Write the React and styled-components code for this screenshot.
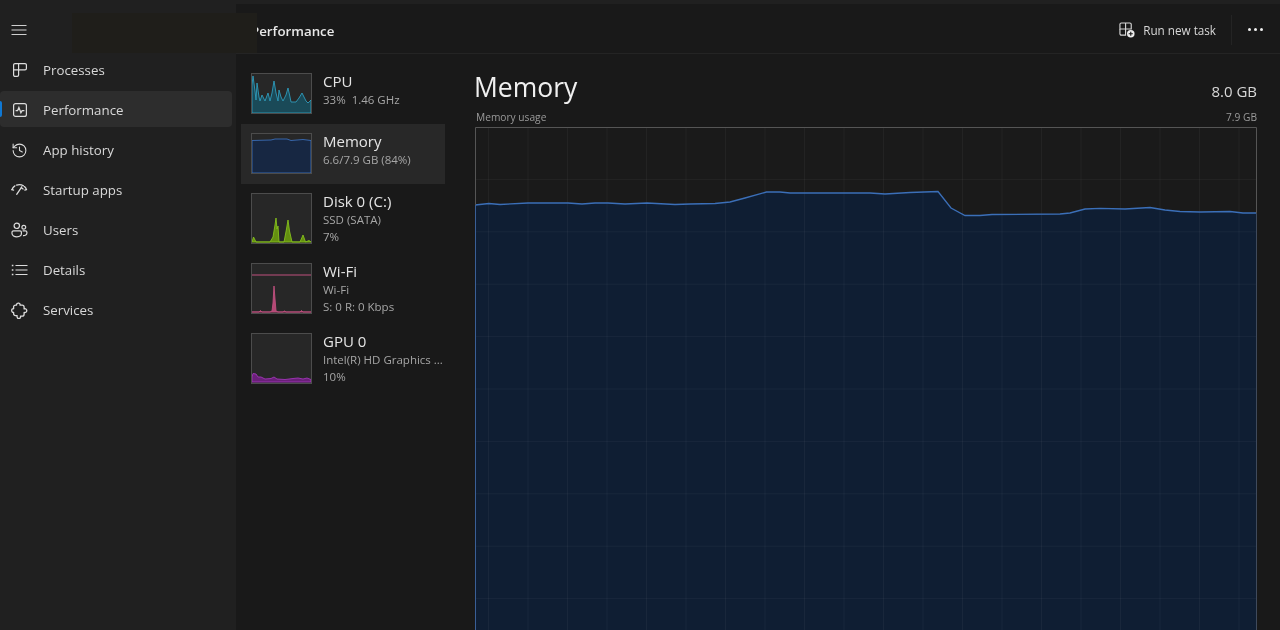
import React from "react";
import styled, { createGlobalStyle } from "styled-components";
import { History } from "lucide-react";

const GlobalStyle = createGlobalStyle`
  html, body {
    margin: 0;
    height: 100%;
    overflow: hidden;
    background: #191919;
  }
  body {
    font-family: "Open Sans", "Noto Sans", sans-serif;
  }
`;

const Window = styled.div`
  position: relative;
  display: grid;
  grid-template-columns: 236px 1fr;
  width: 1280px;
  height: 630px;
  overflow: hidden;
  background: #191919;
  color: #e0e0e0;
  filter: blur(0.35px);
`;

const Sidebar = styled.nav`
  background: #202020;
  display: flex;
  flex-direction: column;
  padding-top: 10px;
`;

const MenuButton = styled.div`
  height: 39px;
  padding-left: 11px;
  display: flex;
  align-items: center;
  margin-bottom: 2px;
  color: #cfcfcf;
`;

const NavList = styled.div`
  display: flex;
  flex-direction: column;
  gap: 4px;
  padding-right: 4px;
`;

const NavItem = styled.div`
  position: relative;
  height: 36px;
  box-sizing: border-box;
  padding: 2px 0 0 11px;
  display: flex;
  align-items: center;
  gap: 15px;
  border-radius: 4px;
  font-size: 13.3px;
  color: #d8d8d8;
  background: ${({ $active }) => ($active ? "#2d2d2d" : "transparent")};

  &::before {
    content: "";
    display: ${({ $active }) => ($active ? "block" : "none")};
    position: absolute;
    left: 0;
    top: 10px;
    width: 2px;
    height: 16px;
    border-radius: 0 2px 2px 0;
    background: #0f78d4;
  }
`;

const IconSlot = styled.span`
  width: 17px;
  height: 17px;
  display: flex;
  align-items: center;
  justify-content: center;
  color: #dcdcdc;
`;

const Main = styled.main`
  display: flex;
  flex-direction: column;
  min-width: 0;
`;

const TopStrip = styled.div`
  height: 4px;
  background: #202020;
`;

const Header = styled.header`
  height: 50px;
  box-sizing: border-box;
  border-bottom: 1px solid #242424;
  display: flex;
  align-items: center;
  justify-content: space-between;
  padding: 2px 17px 0 15px;
`;

const PageTitle = styled.h1`
  margin: 2px 0 0;
  font-size: 13.3px;
  font-weight: 600;
  color: #e8e8e8;
`;

const Actions = styled.div`
  display: flex;
  align-items: center;
`;

const RunTask = styled.div`
  display: flex;
  align-items: center;
  gap: 8px;
  font-size: 11.7px;
  color: #d8d8d8;
  padding-right: 15px;
`;

const Divider = styled.span`
  width: 1px;
  height: 30px;
  background: #242424;
`;

const MoreDots = styled.div`
  display: flex;
  gap: 3px;
  padding-left: 16px;

  span {
    width: 3px;
    height: 3px;
    border-radius: 50%;
    background: #f0f0f0;
  }
`;

const Body = styled.div`
  flex: 1;
  display: flex;
  min-height: 0;
`;

const DeviceList = styled.div`
  width: 204px;
  margin: 0 5px;
  padding-top: 10px;
  display: flex;
  flex-direction: column;
`;

const DeviceRow = styled.div`
  display: flex;
  gap: 11px;
  padding: 9px 0 0 10px;
  height: ${({ $tall }) => ($tall ? "70px" : "60px")};
  box-sizing: border-box;
  background: ${({ $active }) => ($active ? "#282828" : "transparent")};
`;

const Thumb = styled.svg`
  flex: none;
  display: block;
  width: 61px;
  height: ${({ $tall }) => ($tall ? "51px" : "41px")};
`;

const DeviceText = styled.div`
  min-width: 0;
  display: flex;
  flex-direction: column;
  white-space: pre;
`;

const DeviceName = styled.div`
  font-size: 15px;
  line-height: 17.5px;
  color: #e4e4e4;
`;

const DeviceLine = styled.div`
  font-size: 11.5px;
  line-height: 17px;
  color: #a6a6a6;
`;

const Detail = styled.section`
  flex: 1;
  min-width: 0;
  padding: 0 23px 0 25px;
  display: flex;
  flex-direction: column;
`;

const TitleRow = styled.div`
  display: flex;
  justify-content: space-between;
  align-items: flex-end;
  height: 51px;
`;

const Heading = styled.h2`
  margin: 0 0 0 -1px;
  font-size: 26.5px;
  line-height: 36px;
  font-weight: 400;
  color: #f0f0f0;
`;

const Capacity = styled.div`
  font-size: 15px;
  line-height: 20px;
  color: #d8d8d8;
  padding-bottom: 4px;
`;

const ChartLabels = styled.div`
  display: flex;
  justify-content: space-between;
  height: 20px;
  align-items: center;
  padding-left: 1px;
  margin-top: 2px;
  font-size: 10.2px;
  color: #9a9a9a;
`;

const ChartFrame = styled.svg`
  display: block;
  width: 782px;
  height: 524px;
  flex: none;
  overflow: hidden;
`;

// flat dark patch that lies over the title bar in the reference
const CoverPatch = styled.div`
  position: absolute;
  left: 72px;
  top: 13px;
  width: 185px;
  height: 40px;
  background: #1f1e1a;
`;

const navItems = [
  {
    label: "Processes",
    icon: (
      <svg width="16" height="16" viewBox="0 0 16 16" fill="none" stroke="currentColor" strokeWidth="1.2">
        <path d="M3 1.600h3.600v6.200H1.600V3A1.400 1.400 0 0 1 3 1.600Z" />
        <path d="M6.600 1.600H13A1.400 1.400 0 0 1 14.400 3v3.400a1.400 1.400 0 0 1-1.400 1.400H6.600" />
        <path d="M1.600 7.800V13A1.400 1.400 0 0 0 3 14.400h2.200a1.400 1.400 0 0 0 1.400-1.400V7.800" />
      </svg>
    ),
  },
  {
    label: "Performance",
    active: true,
    icon: (
      <svg width="16" height="16" viewBox="0 0 16 16" fill="none" stroke="currentColor" strokeWidth="1.2">
        <rect x="1.600" y="1.600" width="12.800" height="12.800" rx="2" />
        <path d="M3.600 8.600h2l1.300-3.200 2 5.400 1.200-2.200h2.300" />
      </svg>
    ),
  },
  { label: "App history", icon: <History size={17} strokeWidth={1.5} /> },
  {
    label: "Startup apps",
    icon: (
      <svg width="17" height="17" viewBox="0 0 17 17" fill="none" stroke="currentColor" strokeWidth="1.3" strokeLinecap="round">
        <path d="M.9 7.600c.7-1.900 1.800-3 3-3.700" />
        <path d="M.9 7.600l1.700.5" />
        <path d="M5.600 3.100c2.200-.8 4.800-.6 6.800.7" />
        <path d="M5.700 12.300L10.800 4.800" />
        <path d="M13.400 4.600c.9.800 1.700 1.800 2.100 3l-1.700.5" />
        <path d="M10.300 5.800l1.800 1.200" />
      </svg>
    ),
  },
  {
    label: "Users",
    icon: (
      <svg width="17" height="17" viewBox="0 0 17 17" fill="none" stroke="currentColor" strokeWidth="1.2">
        <circle cx="5.800" cy="3.800" r="2.700" />
        <circle cx="12.800" cy="5.200" r="1.900" />
        <path d="M2.600 8.800h6.400A1.400 1.400 0 0 1 10.400 10.200v1.400c0 2-2.200 3.200-4.600 3.200s-4.800-1.200-4.800-3.200v-1.200a1.600 1.600 0 0 1 1.600-1.600Z" />
        <path d="M11.600 8.800h2.800a1.500 1.500 0 0 1 1.500 1.500v.7c0 1.800-1.700 2.800-3.900 2.700" />
      </svg>
    ),
  },
  {
    label: "Details",
    icon: (
      <svg width="17" height="17" viewBox="0 0 17 17" fill="none" stroke="currentColor" strokeWidth="1.2">
        <path d="M4.500 3.500h12M4.500 8h12M4.500 12.500h12" />
        <path d="M.8 3.500h1.600M.8 8h1.600M.8 12.500h1.600" strokeWidth="1.700" />
      </svg>
    ),
  },
  {
    label: "Services",
    icon: (
      <svg width="17" height="17" viewBox="0 0 17 17" fill="none" stroke="currentColor" strokeWidth="1.3" strokeLinejoin="round">
        <path d="M5.600 3.100C5.400 1.700 6.600.8 7.800 1.100c1 .3 1.500 1.200 1.200 2.100h2.100c1.200 0 2 .8 2 2v1.700c1.300-.5 2.700.3 2.700 1.700s-1.400 2.300-2.700 1.800v1.800c0 1.200-.8 2-2 2H9.500c.4 1.300-.5 2.400-1.700 2.400S5.700 14.900 6.100 13.600H4.400c-1 0-1.800-.8-1.800-1.800v-1.500C1.500 10.700.7 9.700.7 8.500s.8-2.100 1.900-1.700V5.100c0-1.200.8-2 2-2Z" />
      </svg>
    ),
  },
];

const chartPoints = [
  [0, 78], [14, 76.5], [25, 77.5], [53, 76], [93, 76], [107, 77], [120, 76], [133, 76],
  [150, 77], [172, 76], [200, 77.5], [215, 77], [240, 76.5], [255, 75], [270, 71],
  [291.5, 65], [305, 65], [315, 66], [395, 66], [410, 67], [435, 65.5], [463, 64.5],
  [476, 81], [490, 88.5], [505, 88.5], [517, 87.5], [585, 87], [595, 86], [610, 82],
  [625, 81.3], [650, 82], [675, 80.5], [690, 83], [705, 84.5], [725, 85], [755, 84.5],
  [768, 86], [782, 86],
];

const linePath = chartPoints.map(([x, y]) => `${x},${y}`).join(" ");
const verticals = Array.from({ length: 20 }, (_, i) => 13.5 + i * 39.5);
const horizontals = Array.from({ length: 9 }, (_, i) => 52.4 * (i + 1));

// small preview graphs, coordinates are in the 61 wide thumbnail box
const thumbs = {
  cpu: {
    line: "#2f9cbc",
    fill: "#1a4a58",
    points: "1,40 1,12 2,3 4,18 5,27 6,10 8,24 9,28 11,22 14,28 17,20 19,28 21,20 23,8 25,20 27,28 28,17 30,24 32,28 35,22 37,15 39,24 40,29 45,29 48,25 51,20 53,24 55,28 57,30 60,27 60,40",
  },
  memory: {
    line: "#3a6db8",
    fill: "#172742",
    points: "1,7.500 20,7 24,6 36,6 40,7.500 46,7 52,6.500 60,7.500 60,40 1,40",
  },
  disk: {
    line: "#84c01c",
    fill: "#648f10",
    points: "1,49 2.500,44 5,49 19,49 22,44 24,32 25,25 26,36 27,33 28,49 33,49 35.500,36 37,27 38.500,38 41,49 49,49 52,42 54.500,49 58,47.500 60,49",
  },
  wifi: {
    line: "#c0507f",
    fill: "#b34874",
    rule: 12,
    points: "1,49 8,49 9.500,47.500 11,49 19,49 21,48 22,40 23,23 24,36 25,48 27,49 32,49 33.500,48 35,49 49,49 50.500,47.500 52,49 60,49",
  },
  gpu: {
    line: "#a035b8",
    fill: "#6a2079",
    points: "1,44 2,40.500 5,41 7,44 10,44 14,46 20,45.500 23,44 26,46 34,46.500 42,45.500 47,45 52,46 56,45 60,46.500 60,49 1,49",
  },
};

const devices = [
  { name: "CPU", lines: ["33%  1.46 GHz"], thumb: "cpu" },
  { name: "Memory", lines: ["6.6/7.9 GB (84%)"], thumb: "memory", active: true },
  { name: "Disk 0 (C:)", lines: ["SSD (SATA)", "7%"], thumb: "disk", tall: true },
  { name: "Wi-Fi", lines: ["Wi-Fi", "S: 0 R: 0 Kbps"], thumb: "wifi", tall: true },
  { name: "GPU 0", lines: ["Intel(R) HD Graphics ...", "10%"], thumb: "gpu", tall: true },
];

const Preview = ({ kind, tall }) => {
  const data = thumbs[kind];
  const h = tall ? 51 : 41;
  return (
    <Thumb $tall={tall} viewBox={`0 0 61 ${h}`}>
      <rect x="0.5" y="0.5" width="60" height={h - 1} fill="#272727" />
      <polygon points={data.points} fill={data.fill} stroke={data.line} strokeWidth="0.9" />
      {data.rule && <line x1="1" x2="60" y1={data.rule} y2={data.rule} stroke={data.line} />}
      <rect x="0.5" y="0.5" width="60" height={h - 1} fill="none" stroke="#4c4c4c" />
    </Thumb>
  );
};

const App = () => (
  <>
    <GlobalStyle />
    <Window>
      <Sidebar>
        <MenuButton>
          <svg width="16" height="16" viewBox="0 0 16 16" stroke="currentColor" strokeWidth="1.1">
            <path d="M.5 3.500h15M.5 8h15M.5 12.500h15" />
          </svg>
        </MenuButton>
        <NavList>
          {navItems.map((item) => (
            <NavItem key={item.label} $active={item.active}>
              <IconSlot>{item.icon}</IconSlot>
              {item.label}
            </NavItem>
          ))}
        </NavList>
      </Sidebar>
      <Main>
        <TopStrip />
        <Header>
          <PageTitle>Performance</PageTitle>
          <Actions>
            <RunTask>
              <svg width="16" height="16" viewBox="0 0 17 17" fill="none" stroke="currentColor" strokeWidth="1.2">
                <path d="M7 7.500H1V2.500A1.500 1.500 0 0 1 2.500 1H7ZM7 1h4.500A1.500 1.500 0 0 1 13 2.500V7.500H7" />
                <path d="M1 7.500v5A1.500 1.500 0 0 0 2.500 14H7V7.500" />
                <circle cx="12.500" cy="12.500" r="4" fill="#ececec" stroke="none" />
                <path d="M12.500 10.300v4.400M10.300 12.500h4.400" stroke="#191919" strokeWidth="1.200" />
              </svg>
              Run new task
            </RunTask>
            <Divider />
            <MoreDots>
              <span />
              <span />
              <span />
            </MoreDots>
          </Actions>
        </Header>
        <Body>
          <DeviceList>
            {devices.map((d) => (
              <DeviceRow key={d.name} $active={d.active} $tall={d.tall}>
                <Preview kind={d.thumb} tall={d.tall} />
                <DeviceText>
                  <DeviceName>{d.name}</DeviceName>
                  {d.lines.map((line) => (
                    <DeviceLine key={line}>{line}</DeviceLine>
                  ))}
                </DeviceText>
              </DeviceRow>
            ))}
          </DeviceList>
          <Detail>
            <TitleRow>
              <Heading>Memory</Heading>
              <Capacity>8.0 GB</Capacity>
            </TitleRow>
            <ChartLabels>
              <span>Memory usage</span>
              <span>7.9 GB</span>
            </ChartLabels>
            <ChartFrame viewBox="0 0 782 524">
              <rect width="782" height="524" fill="#1a1a1a" />
              <polygon points={`${linePath} 782,524 0,524`} fill="#0f1e33" />
              <g stroke="#ffffff" strokeOpacity="0.045">
                {verticals.map((x) => (
                  <line key={x} x1={x} x2={x} y1="0" y2="524" />
                ))}
                {horizontals.map((y) => (
                  <line key={y} x1="0" x2="782" y1={y} y2={y} />
                ))}
              </g>
              <polyline points={linePath} fill="none" stroke="#3b6fb8" strokeWidth="1.300" />
              <path d="M.5 524V78" stroke="#3a5f96" fill="none" />
              <path d="M.5 78V.5H781.500V86" stroke="#555555" fill="none" />
              <path d="M781.500 86V524" stroke="#3f4a5c" fill="none" />
            </ChartFrame>
          </Detail>
        </Body>
      </Main>
      <CoverPatch />
    </Window>
  </>
);

export default App;
